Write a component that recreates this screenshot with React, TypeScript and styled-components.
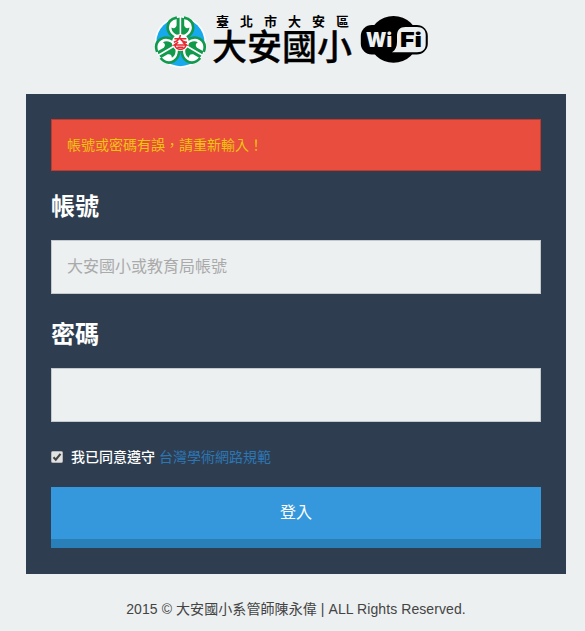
import React from "react";
import styled, { createGlobalStyle } from "styled-components";

const GlobalStyle = createGlobalStyle`
  * { box-sizing: border-box; }
  body {
    margin: 0;
    background: #ecf0f1;
    color: #444;
    font: 14px/20px "Liberation Sans", "Noto Sans CJK TC", sans-serif;
  }
`;

const Page = styled.div`
  width: 585px;
  height: 631px;
  padding: 14px 19px 0 26px;
  overflow: hidden;
`;

const Header = styled.header`
  display: flex;
  height: 80px;
  padding-left: 128px;
`;

const SchoolName = styled.div`
  width: 142px;
  margin-left: 6px;
  color: #000;
  font-family: "Noto Sans CJK TC", sans-serif;
  white-space: nowrap;
`;

const District = styled.div`
  padding-left: 4px;
  font-size: 13px;
  line-height: 14px;
  font-weight: 700;
  letter-spacing: 11px;
`;

const School = styled.div`
  font-size: 35px;
  line-height: 36px;
  margin-top: -1px;
  font-weight: 500;
  -webkit-text-stroke: 0.3px #000;
`;

const Emblem = styled.svg`
  flex: none;
`;

const Wifi = styled.svg`
  flex: none;
  margin: 1px 0 0 6px;
`;

const Card = styled.form`
  display: flex;
  flex-direction: column;
  width: 540px;
  height: 480px;
  padding: 25px;
  background: #2e3e50;
`;

const Alert = styled.div`
  height: 52px;
  padding: 15px;
  border: 1px solid #c0392b;
  background: #e84d3d;
  color: #f1c40f;
`;

const Label = styled.label<{ $gap: number }>`
  margin: ${(p) => p.$gap}px 0 20px;
  color: #fff;
  font-size: 24px;
  line-height: 26px;
  font-weight: 700;
`;

const Input = styled.input`
  width: 100%;
  height: 54px;
  padding: 0 15px;
  border: 1px solid #c3c9cc;
  border-radius: 0;
  outline: none;
  background: #ecf0f1;
  color: #555;
  font: 16px "Liberation Sans", "Noto Sans CJK TC", sans-serif;
  &::placeholder { color: #aaa; opacity: 1; }
`;

const Agreement = styled.label`
  display: flex;
  align-items: center;
  height: 20px;
  margin: 25px 0 20px;
  color: #fff;
  font-weight: 500;
`;

const Box = styled.svg`
  margin-right: 8px;
`;

const PolicyLink = styled.a`
  margin-left: 4px;
  color: #2d76b5;
  font-weight: 400;
  text-decoration: none;
`;

const Submit = styled.button`
  height: 61px;
  padding: 0;
  border: 0;
  border-bottom: 9px solid #2980b9;
  background: #3598dc;
  color: #fff;
  font: 16px/50px "Liberation Sans", "Noto Sans CJK TC", sans-serif;
`;

const Footer = styled.footer`
  padding-top: 25px;
  text-align: center;
  white-space: nowrap;
  letter-spacing: 0.08px;
`;

const Leaf = ({ angle }: { angle: number }) => (
  <g transform={`rotate(${angle} 26 28.5)`}>
    <path
      d="M26 3C17 3 13.2 8.5 13.2 13.5C13.2 19 17 23 22 25.5H30C35 23 38.8 19 38.8 13.5C38.8 8.5 35 3 26 3Z"
      fill="#fff"
    />
    <path
      d="M22.5 3.6C16 4.8 13.2 9 13.2 13.5C13.2 18.5 16.6 22 21.5 24.5M29.5 3.6C36 4.8 38.8 9 38.8 13.5C38.8 18.5 35.4 22 30.5 24.5"
      fill="none" stroke="#11994c" strokeWidth="2.6"
    />
    <path
      d="M25.2 3.6L22.2 4.2V11.5C21 14.6 19.2 14.6 17 13.5C17.2 18 20.4 20.6 25.2 21.4ZM26.8 3.6L29.8 4.2V11.5C31 14.6 32.8 14.6 35 13.5C34.8 18 31.6 20.6 26.8 21.4Z"
      fill="#11994c"
    />
  </g>
);

const SchoolEmblem = () => (
  <Emblem width="52" height="56" viewBox="0 0 52 56" aria-hidden="true">
    <circle cx="26.4" cy="28.2" r="25.6" fill="#fff" />
    <circle cx="26.4" cy="28.2" r="24" fill="#17a9ed" />
    <g transform="translate(.4 0)">
      <Leaf angle={0} />
      <Leaf angle={120} />
      <Leaf angle={240} />
      <circle cx="26" cy="28.5" r="8.6" fill="#fff" />
      <path
        d="M20 24.8H32M26 21C25.6 24.8 23.5 27 19.4 28.3M26.2 24.8C27.2 26.9 29.3 28 32.6 28.3M23.8 28.2L20 31H32L28.2 28.2M20.5 30.5C20.7 37 31.3 37 31.5 30.5M23 33.3H29"
        fill="none" stroke="#e62831" strokeWidth="1.6"
      />
    </g>
  </Emblem>
);

const WifiText = styled.text`
  font: 900 20px Inter, "Liberation Sans", sans-serif;
`;

const WifiLogo = () => (
  <Wifi width="68" height="49" viewBox="0 0 68 49" aria-label="WiFi">
    <ellipse cx="33.5" cy="24.4" rx="24.3" ry="23.4" />
    <rect x="0.8" y="10" width="67" height="29.4" rx="11" />
    <path
      d="M32 37.2C35.5 35.2 37 31.5 37 27V21C37 15 40 12 45.5 12H57C62.8 12 65.7 15 65.7 20V29C65.7 34.4 62.8 37.2 57 37.2Z"
      fill="#ecf0f1"
    />
    <WifiText x="6" y="32" textLength="26" lengthAdjust="spacingAndGlyphs" fill="#ecf0f1">Wi</WifiText>
    <WifiText x="40" y="32" textLength="22" lengthAdjust="spacingAndGlyphs" fill="#000">Fi</WifiText>
  </Wifi>
);

const CheckedBox = () => (
  <Box width="12" height="12" viewBox="0 0 12 12" aria-hidden="true">
    <rect x="0.5" y="0.5" width="11" height="11" rx="1" fill="#e2e2e2" stroke="#b5b5b5" />
    <path d="M2.5 6.2L4.8 8.7L9.5 2.8" fill="none" stroke="#444" strokeWidth="2.1" />
  </Box>
);

export default function App() {
  return (
    <>
      <GlobalStyle />
      <Page>
        <Header>
          <SchoolEmblem />
          <SchoolName>
            <District>臺北市大安區</District>
            <School>大安國小</School>
          </SchoolName>
          <WifiLogo />
        </Header>
        <Card>
          <Alert>帳號或密碼有誤，請重新輸入！</Alert>
          <Label $gap={23} htmlFor="account">帳號</Label>
          <Input id="account" placeholder="大安國小或教育局帳號" />
          <Label $gap={28} htmlFor="password">密碼</Label>
          <Input id="password" type="password" />
          <Agreement>
            <CheckedBox />
            我已同意遵守
            <PolicyLink>台灣學術網路規範</PolicyLink>
          </Agreement>
          <Submit type="button">登入</Submit>
        </Card>
        <Footer>2015 © 大安國小系管師陳永偉 | ALL Rights Reserved.</Footer>
      </Page>
    </>
  );
}
